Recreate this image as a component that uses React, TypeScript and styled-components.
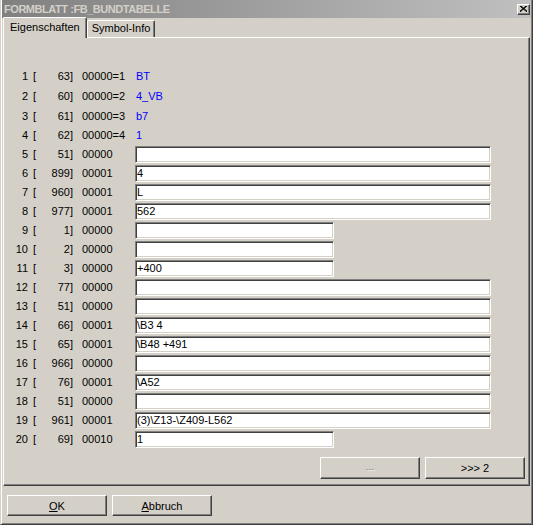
import React from 'react';
import styled, { createGlobalStyle } from 'styled-components';

const Global = createGlobalStyle`
  html, body { margin: 0; padding: 0; background: #d4d0c8; }
  body { font-family: "Liberation Sans", Arial, sans-serif; font-size: 11px; color: #000; }
  * { box-sizing: border-box; }
`;

const Window = styled.div`
  width: 533px;
  height: 525px;
  display: flex;
  flex-direction: column;
  background: #d4d0c8;
  border-left: 1px solid #d4d0c8;
  border-right: 1px solid #404040;
  border-bottom: 1px solid #404040;
  box-shadow: inset 1px 0 #ffffff, inset -1px -1px #808080;
  padding: 0 1px 1px 1px;
`;

const TitleBar = styled.div`
  height: 18px;
  flex: none;
  display: flex;
  align-items: center;
  justify-content: space-between;
  padding: 0 0 0 2px;
  background: linear-gradient(to right, #808080, #c0c0c0);
`;

const TitleText = styled.span`
  font-weight: bold;
  font-size: 11px;
  line-height: 16px;
  color: #d4d0c8;
  letter-spacing: -0.45px;
`;

const CloseButton = styled.div`
  width: 13px;
  height: 11px;
  margin-right: 1px;
  background: #d4d0c8;
  border-top: 1px solid #ffffff;
  border-left: 1px solid #ffffff;
  border-right: 1px solid #404040;
  border-bottom: 1px solid #404040;
  box-shadow: inset -1px -1px #808080;
  display: flex;
  align-items: center;
  justify-content: center;
`;

const TabStrip = styled.div`
  height: 20px;
  flex: none;
  display: flex;
  align-items: flex-end;
  padding-left: 1px;
  position: relative;
  z-index: 1;
  margin-bottom: -1px;
`;

const Tab = styled.div<{ $active?: boolean }>`
  height: ${(p) => (p.$active ? 21 : 17)}px;
  padding: ${(p) => (p.$active ? '3px 6px 0 6px' : '1px 4px 0 4px')};
  background: #d4d0c8;
  border-top: 1px solid #ffffff;
  border-left: 1px solid #ffffff;
  border-right: 1px solid #404040;
  box-shadow: inset -1px 0 #808080;
  border-top-left-radius: 2px;
  border-top-right-radius: 2px;
  margin-bottom: ${(p) => (p.$active ? 0 : 1)}px;
  white-space: nowrap;
  line-height: 13px;
`;

const Panel = styled.div`
  flex: none;
  height: 449px;
  margin: 0 1px;
  display: flex;
  flex-direction: column;
  border-top: 1px solid #ffffff;
  border-left: 1px solid #ffffff;
  border-right: 1px solid #404040;
  border-bottom: 1px solid #404040;
  box-shadow: inset -1px -1px #808080;
  padding-top: 28px;
`;

const Rows = styled.div`
  display: flex;
  flex-direction: column;
`;

const Row = styled.div<{ $h: number }>`
  height: ${(p) => p.$h}px;
  display: flex;
  align-items: center;
`;

const Cell = styled.span<{ $w: number; $right?: boolean; $ml?: number }>`
  width: ${(p) => p.$w}px;
  margin-left: ${(p) => p.$ml ?? 0}px;
  text-align: ${(p) => (p.$right ? 'right' : 'left')};
  white-space: nowrap;
  flex: none;
`;

const BlueValue = styled.span`
  color: #0000ff;
  padding-left: 1px;
`;

const Field = styled.input<{ $w: number }>`
  width: ${(p) => p.$w}px;
  height: 17px;
  margin-top: 1px;
  padding: 0 1px;
  background: #ffffff;
  border-top: 1px solid #808080;
  border-left: 1px solid #808080;
  border-right: 1px solid #ffffff;
  border-bottom: 1px solid #ffffff;
  box-shadow: inset 1px 1px #404040, inset -1px -1px #d4d0c8;
  font-family: "Liberation Sans", Arial, sans-serif;
  font-size: 11px;
  color: #000;
  outline: none;
  border-radius: 0;
`;

const ButtonRow = styled.div`
  margin-top: auto;
  display: flex;
  justify-content: flex-end;
  gap: 5px;
  padding: 0 4px 6px 0;
`;

const Button = styled.div<{ $h?: number; $disabled?: boolean }>`
  width: 100px;
  height: ${(p) => p.$h ?? 22}px;
  display: flex;
  align-items: center;
  justify-content: center;
  background: #d4d0c8;
  border-top: 1px solid #ffffff;
  border-left: 1px solid #ffffff;
  border-right: 1px solid #404040;
  border-bottom: 1px solid #404040;
  box-shadow: inset -1px -1px #808080;
  color: ${(p) => (p.$disabled ? '#808080' : '#000')};
  text-shadow: ${(p) => (p.$disabled ? '1px 1px #ffffff' : 'none')};
  font-size: ${(p) => (p.$disabled ? 8 : 11)}px;
`;

const Footer = styled.div`
  display: flex;
  gap: 5px;
  padding: 9px 0 0 5px;
`;

const Accel = styled.span`
  text-decoration: underline;
`;

type RowData = {
  n: number;
  ref: number;
  code: string;
  blue?: string;
  value?: string;
  narrow?: boolean;
};

const rows: RowData[] = [
  { n: 1, ref: 63, code: '00000=1', blue: 'BT' },
  { n: 2, ref: 60, code: '00000=2', blue: '4_VB' },
  { n: 3, ref: 61, code: '00000=3', blue: 'b7' },
  { n: 4, ref: 62, code: '00000=4', blue: '1' },
  { n: 5, ref: 51, code: '00000', value: '' },
  { n: 6, ref: 899, code: '00001', value: '4' },
  { n: 7, ref: 960, code: '00001', value: 'L' },
  { n: 8, ref: 977, code: '00001', value: '562' },
  { n: 9, ref: 1, code: '00000', value: '', narrow: true },
  { n: 10, ref: 2, code: '00000', value: '', narrow: true },
  { n: 11, ref: 3, code: '00000', value: '+400', narrow: true },
  { n: 12, ref: 77, code: '00000', value: '' },
  { n: 13, ref: 51, code: '00000', value: '' },
  { n: 14, ref: 66, code: '00001', value: '\\B3 4' },
  { n: 15, ref: 65, code: '00001', value: '\\B48 +491' },
  { n: 16, ref: 966, code: '00000', value: '' },
  { n: 17, ref: 76, code: '00001', value: '\\A52' },
  { n: 18, ref: 51, code: '00000', value: '' },
  { n: 19, ref: 961, code: '00001', value: '(3)\\Z13-\\Z409-L562' },
  { n: 20, ref: 69, code: '00010', value: '1', narrow: true },
];

const rowHeight = (r: RowData) => (r.blue === undefined ? 19 : r.n === 4 ? 18 : 20);

export default function App() {
  return (
    <>
      <Global />
      <Window>
        <TitleBar>
          <TitleText>FORMBLATT :FB_BUNDTABELLE</TitleText>
          <CloseButton>
            <svg width="7" height="6" viewBox="0 0 7 6">
              <path d="M0 0 L7 6 M1 0 L7 5.2 M7 0 L0 6 M6 0 L0 5.2" stroke="#000" strokeWidth="1" fill="none" />
            </svg>
          </CloseButton>
        </TitleBar>
        <TabStrip>
          <Tab $active>Eigenschaften</Tab>
          <Tab>Symbol-Info</Tab>
        </TabStrip>
        <Panel>
          <Rows>
            {rows.map((r) => (
              <Row key={r.n} $h={rowHeight(r)}>
                <Cell $w={24} $right>{r.n}</Cell>
                <Cell $w={4} $ml={5}>[</Cell>
                <Cell $w={36} $right>{r.ref}]</Cell>
                <Cell $w={53} $ml={9}>{r.code}</Cell>
                {r.blue !== undefined ? (
                  <BlueValue>{r.blue}</BlueValue>
                ) : (
                  <Field $w={r.narrow ? 199 : 356} readOnly defaultValue={r.value} />
                )}
              </Row>
            ))}
          </Rows>
          <ButtonRow>
            <Button $disabled>---</Button>
            <Button>&gt;&gt;&gt; 2</Button>
          </ButtonRow>
        </Panel>
        <Footer>
          <Button $h={21}>
            <span><Accel>O</Accel>K</span>
          </Button>
          <Button $h={21}>
            <span><Accel>A</Accel>bbruch</span>
          </Button>
        </Footer>
      </Window>
    </>
  );
}
